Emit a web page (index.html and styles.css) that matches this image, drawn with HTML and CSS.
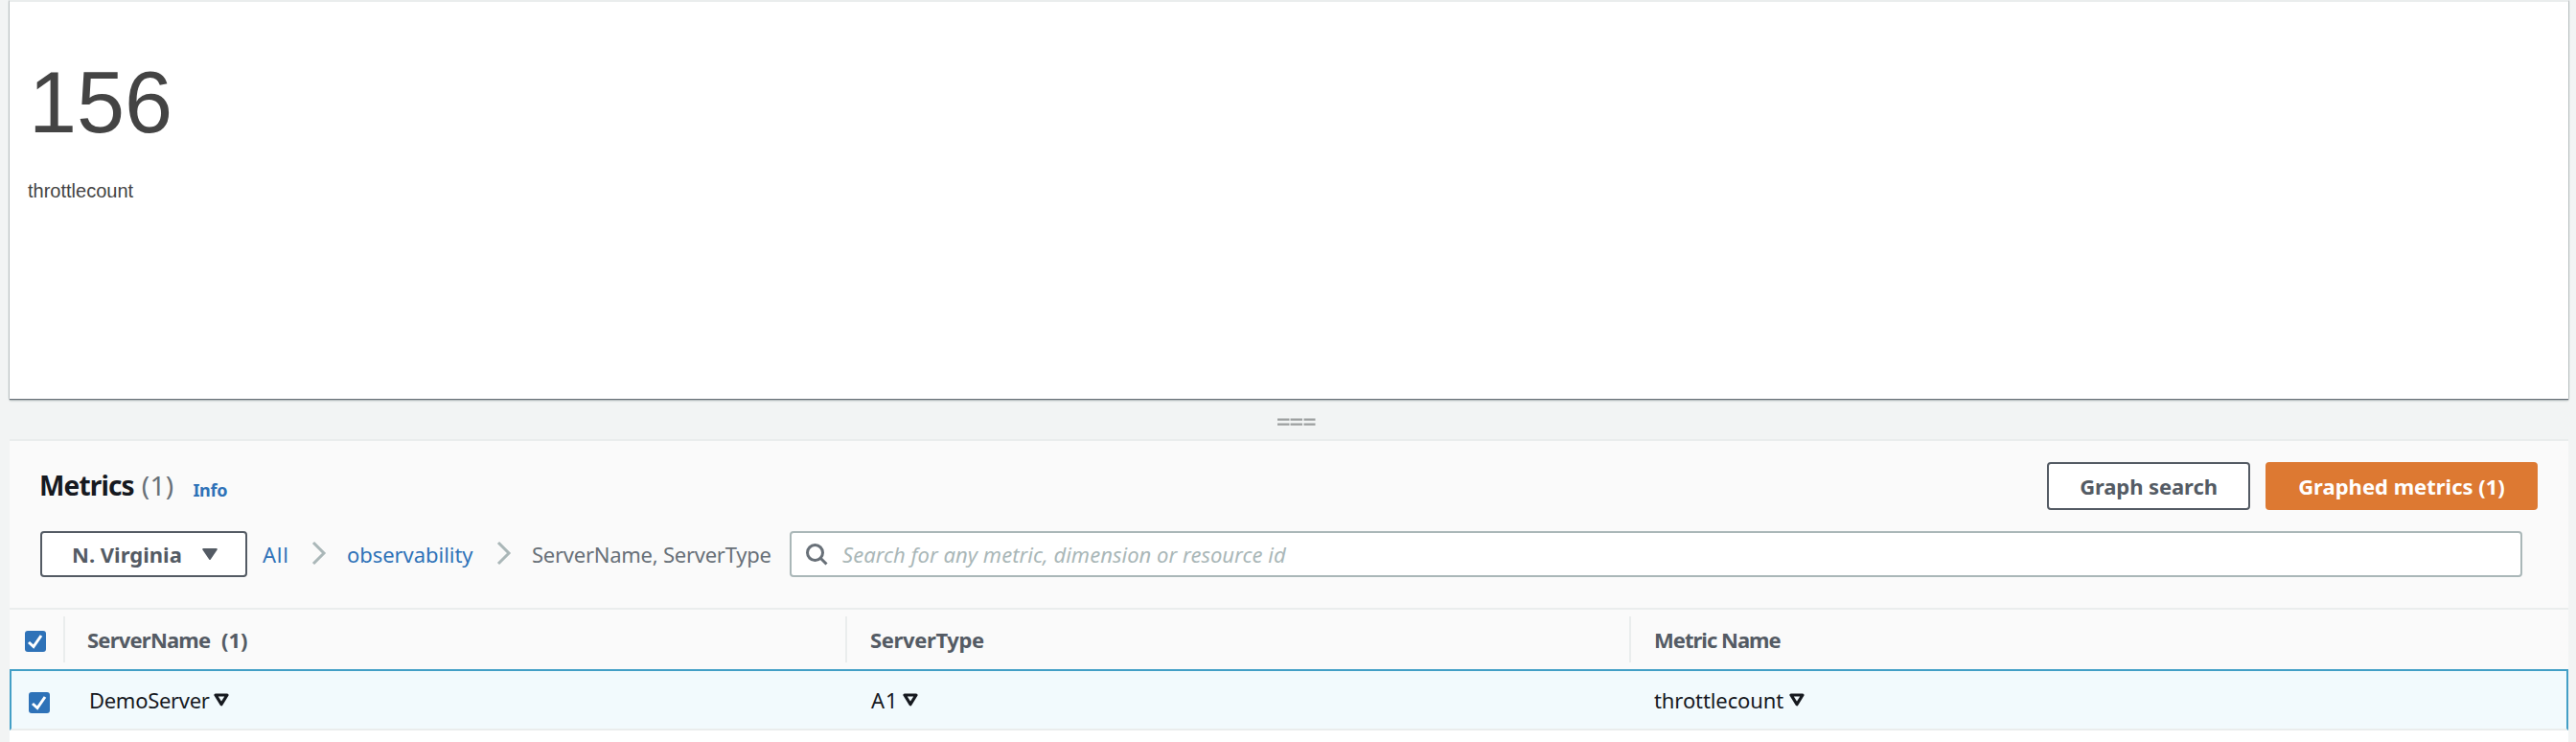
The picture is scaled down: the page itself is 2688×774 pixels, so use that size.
FILE: index.html
```html
<!DOCTYPE html>
<html lang="en">
<head>
<meta charset="utf-8">
<title>Metrics</title>
<link rel="stylesheet" href="styles.css">
</head>
<body>
<section class="chart">
  <div class="chart-value">156</div>
  <div class="chart-label">throttlecount</div>
</section>
<div class="splitter">
  <svg width="40" height="9" viewBox="0 0 40 9" fill="#9c9f9f"><path d="M0 .5h12v2.300H0zM14 .5h12v2.300H14zM27.500 .5h12v2.300h-12zM0 5.500h12v2.300H0zM14 5.500h12v2.300H14zM27.500 5.500h12v2.300h-12z"/><path d="M12 .5h2v2.300h-2zM12 5.500h2v2.300h-2z" fill="#c9cccc"/></svg>
</div>
<main class="panel">
  <header class="panel-head">
    <h1 class="title">Metrics</h1>
    <span class="count">(1)</span>
    <a class="info">Info</a>
    <div class="actions">
      <button class="btn btn-search">Graph search</button>
      <button class="btn btn-primary">Graphed metrics (1)</button>
    </div>
  </header>
  <div class="filters">
    <button class="region">N. Virginia
      <svg width="16" height="12" viewBox="0 0 16 12"><path d="M1.200 1h13.600L8 11z" fill="#545b64" stroke="#545b64" stroke-width="2" stroke-linejoin="round"/></svg>
    </button>
    <a class="crumb crumb-all">All</a>
    <svg class="chevron" width="16" height="26" viewBox="0 0 16 26"><path d="M2 2l11 11L2 24" fill="none" stroke="#aab7b8" stroke-width="3"/></svg>
    <a class="crumb crumb-namespace">observability</a>
    <svg class="chevron" width="16" height="26" viewBox="0 0 16 26"><path d="M2 2l11 11L2 24" fill="none" stroke="#aab7b8" stroke-width="3"/></svg>
    <span class="crumb crumb-current">ServerName, ServerType</span>
    <div class="search">
      <svg width="24" height="24" viewBox="0 0 24 24" fill="none" stroke="#687078" stroke-width="3"><circle cx="10.500" cy="10.500" r="8"/><path d="M16 16l6.500 6.500"/></svg>
      <span class="placeholder">Search for any metric, dimension or resource id</span>
    </div>
  </div>
  <div class="row row-head">
    <div class="cell-check"><svg width="22" height="22" viewBox="0 0 22 22"><rect width="22" height="22" rx="3" fill="#2e72b8"/><path d="M4 12l5 4.500L17 5" fill="none" stroke="#fff" stroke-width="3"/></svg></div>
    <div class="cell"><span class="name">ServerName</span><span class="total">(1)</span></div>
    <div class="cell"><span class="type">ServerType</span></div>
    <div class="cell"><span class="metric">Metric Name</span></div>
  </div>
  <div class="row row-selected">
    <div class="cell-check"><svg width="22" height="22" viewBox="0 0 22 22"><rect width="22" height="22" rx="3" fill="#2e72b8"/><path d="M4 12l5 4.500L17 5" fill="none" stroke="#fff" stroke-width="3"/></svg></div>
    <div class="cell"><span class="v-name">DemoServer</span><svg class="menu" width="16" height="14" viewBox="0 0 16 14"><path d="M2 2h12L8 11.700z" fill="none" stroke="#16191f" stroke-width="3.200" stroke-linejoin="round"/></svg></div>
    <div class="cell"><span class="v-type">A1</span><svg class="menu" width="16" height="14" viewBox="0 0 16 14"><path d="M2 2h12L8 11.700z" fill="none" stroke="#16191f" stroke-width="3.200" stroke-linejoin="round"/></svg></div>
    <div class="cell"><span class="v-metric">throttlecount</span><svg class="menu" width="16" height="14" viewBox="0 0 16 14"><path d="M2 2h12L8 11.700z" fill="none" stroke="#16191f" stroke-width="3.200" stroke-linejoin="round"/></svg></div>
  </div>
</main>
</body>
</html>
```
FILE: styles.css
```css
* { box-sizing: border-box; }
body {
  margin: 0;
  padding: 0 8px 0 10px;
  height: 774px;
  overflow: hidden;
  background: #f2f4f4;
  color: #16191f;
  font: 22px/30px "Noto Sans", sans-serif;
  white-space: nowrap;
}
svg { display: block; flex: none; }
h1 { margin: 0; }
button { font: inherit; margin: 0; cursor: pointer; }

.chart {
  height: 416px;
  padding: 52px 0 0 19px;
  border-top: 2px solid #eaeded;
  background: #fff;
  box-shadow: 0 1px 1px #687078, 0 2px 2px #b9c0c0, 0 0 2px #9aa2a3;
  color: #444;
  font-family: "Liberation Sans", Arial, sans-serif;
}
.chart-value { padding-left: 1px; font-size: 90px; line-height: 106px; }
.chart-label { margin-top: 27px; font-size: 20px; line-height: 24px; }

.splitter { height: 42px; padding-top: 20px; display: flex; justify-content: center; }
.splitter svg { margin-left: 16px; }

.panel { height: 316px; border-top: 2px solid #eaeded; background: #fff; }
.panel-head {
  display: flex;
  align-items: center;
  height: 94px;
  padding: 0 32px 0 31px;
  background: #fafafa;
}
.title, .count { margin-bottom: 3px; font-size: 28px; line-height: 38px; }
.title { font-weight: 700; letter-spacing: -.85px; }
.count { margin-left: 8px; letter-spacing: .29px; color: #687078; }
.info { margin: 8px 0 0 20px; font-size: 18px; line-height: 24px; font-weight: 700; letter-spacing: -.3px; color: #2e72b8; }
.actions { display: flex; gap: 16px; margin-left: auto; }
.btn {
  height: 50px;
  padding: 0;
  border: 2px solid #545b64;
  border-radius: 4px;
  background: #fff;
  color: #545b64;
  font-weight: 700;
}
.btn-search { width: 212px; letter-spacing: -.09px; }
.btn-primary { width: 284px; border-color: #dd7932; background: #dd7932; color: #fff; }

.filters {
  display: flex;
  align-items: center;
  height: 80px;
  padding: 0 48px 32px 32px;
  background: #fafafa;
}
.region {
  display: flex;
  align-items: center;
  justify-content: space-between;
  width: 216px;
  height: 48px;
  padding: 0 29px 1px 31px;
  border: 2px solid #545b64;
  border-radius: 4px;
  background: #fff;
  color: #545b64;
  font-weight: 700;
}
.crumb { padding-bottom: 1px; color: #2e72b8; }
.crumb-all { width: 51px; margin-left: 16px; letter-spacing: .8px; }
.crumb-namespace { width: 156px; margin-left: 21px; letter-spacing: -.05px; }
.crumb-current { width: 269px; margin-left: 21px; letter-spacing: -.25px; color: #687078; }
.chevron { margin-top: -2px; }
.search {
  display: flex;
  flex: 1;
  align-items: center;
  height: 48px;
  padding: 0 0 1px 14px;
  border: 2px solid #aab7b8;
  border-radius: 4px;
  background: #fff;
}
.placeholder { margin-left: 15px; font-style: italic; letter-spacing: .03px; color: #aab7b8; }

.row { display: grid; align-items: center; }
.cell { display: flex; align-items: center; }
.row-head {
  grid-template-columns: 56px 816px 818px 1fr;
  height: 64px;
  border-top: 2px solid #eaeded;
  background: #fafafa;
  color: #545b64;
  font-weight: 700;
}
.row-head .cell-check { padding: 4px 0 0 16px; }
.row-head .cell { height: 48px; padding-left: 24px; border-left: 2px solid #eaeded; }
.row-head .cell:nth-child(2) { padding-left: 23px; }
.name { width: 140px; letter-spacing: -.79px; }
.type { letter-spacing: -.37px; }
.metric { letter-spacing: -.99px; }
.row-selected {
  grid-template-columns: 54px 816px 817px 1fr;
  height: 64px;
  border: solid #439fc6;
  border-width: 2px 2px 0;
  border-bottom: 2px solid #eaeded;
  background: #f2fafd;
}
.row-selected .cell-check { padding: 6px 0 0 18px; }
.row-selected .cell { padding: 0 0 1px 27px; }
.menu { margin-top: 1px; }
.v-name { width: 130px; letter-spacing: -.3px; }
.v-type { width: 33px; letter-spacing: 1px; }
.v-metric { width: 141px; letter-spacing: -.1px; }
```
